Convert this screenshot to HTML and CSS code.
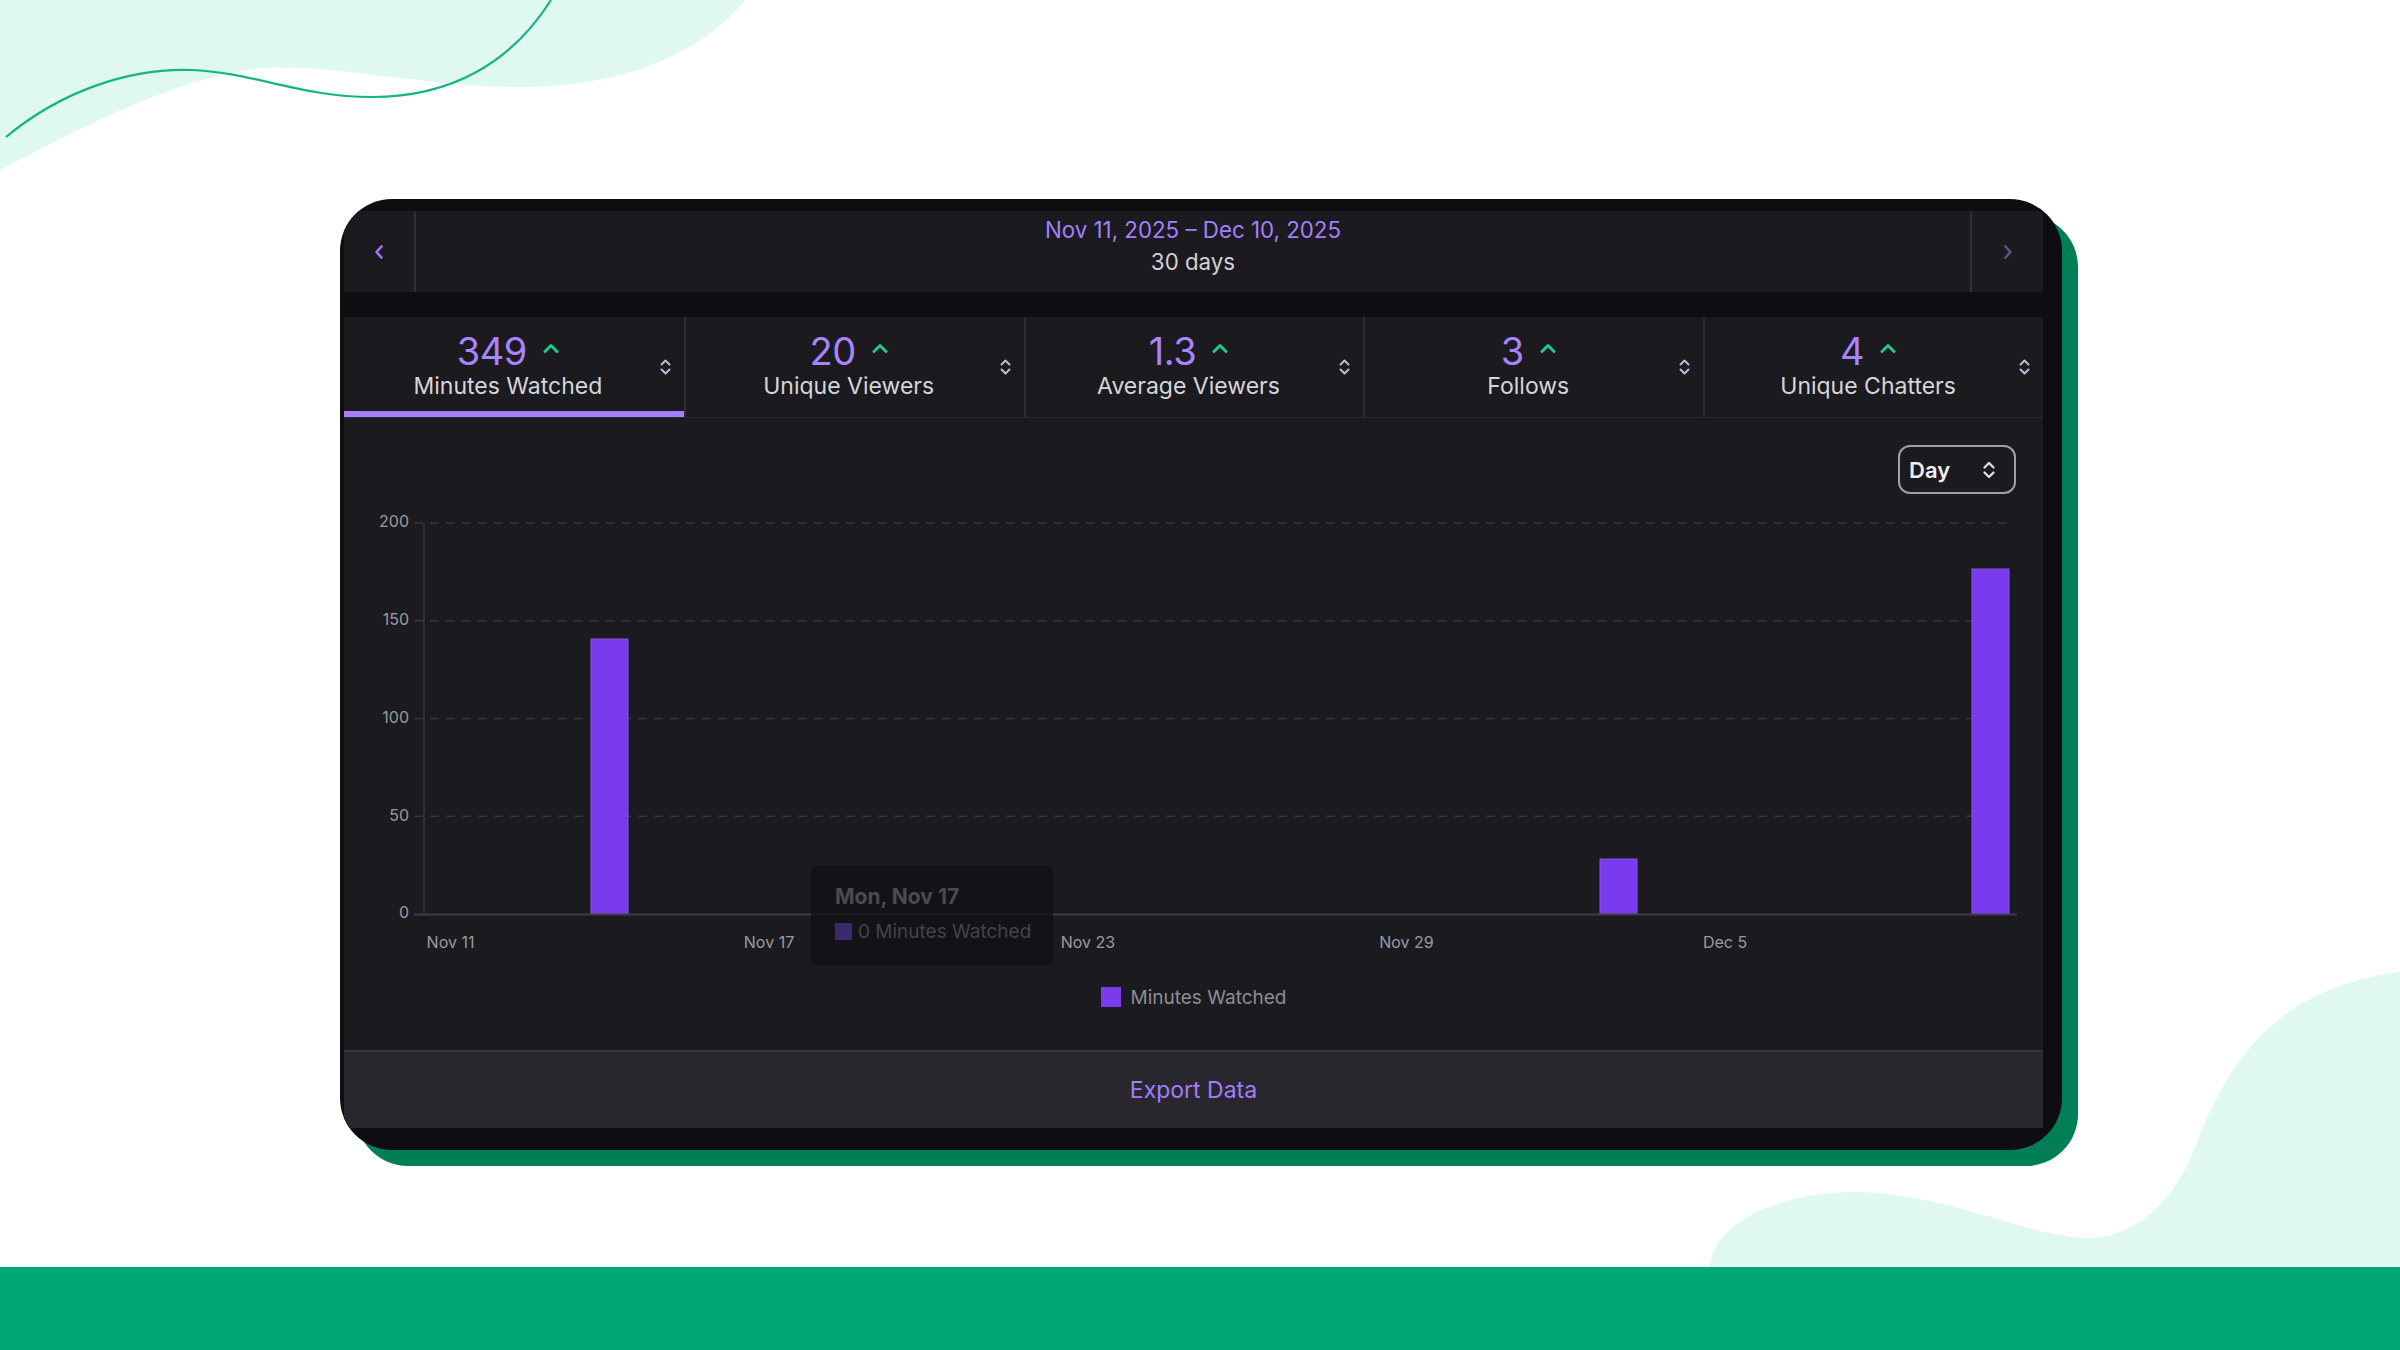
FILE: index.html
```html
<!DOCTYPE html>
<html lang="en">
<head>
<meta charset="utf-8">
<title>Stream Summary</title>
<link rel="stylesheet" href="styles.css">
</head>
<body>
<div class="page">
  <svg class="decor" width="2400" height="1350" viewBox="0 0 2400 1350" aria-hidden="true">
    <path class="blob" d="M0,0 L745,0 C700,55 620,88 515,87 C420,86 335,64 265,68 C180,76 85,125 0,170 Z"/>
    <path class="blob" d="M1710,1267 C1712,1222 1785,1190 1860,1192 C1950,1195 2030,1236 2082,1238 C2140,1240 2178,1195 2198,1140 C2238,1035 2300,985 2400,972 L2400,1267 Z"/>
    <path class="swoosh" d="M6,137 C60,92 128,68 191,70 C252,72 300,97 372,97 C452,97 512,62 551,0"/>
  </svg>

  <main class="stage">
    <section class="frame">
      <div class="screen">
        <header class="datebar">
          <button class="nav nav-prev" type="button" aria-label="Previous">
            <svg width="10" height="14" viewBox="0 0 10 14"><path d="M7.5 1.5 L2.5 7 L7.5 12.5"/></svg>
          </button>
          <div class="range">
            <div class="range-dates">Nov 11, 2025 – Dec 10, 2025</div>
            <div class="range-len">30 days</div>
          </div>
          <button class="nav nav-next" type="button" aria-label="Next">
            <svg width="10" height="14" viewBox="0 0 10 14"><path d="M2.5 1.5 L7.5 7 L2.5 12.5"/></svg>
          </button>
        </header>

        <div class="stats">
          <div class="stat active">
            <div class="stat-body">
              <div class="stat-value"><span class="num">349</span><svg class="up" width="16" height="10" viewBox="0 0 16 10"><path d="M2 8.5 L8 2.5 L14 8.5"/></svg></div>
              <div class="stat-label">Minutes Watched</div>
            </div>
            <svg class="sort" width="11" height="18" viewBox="0 0 11 18"><path d="M1.5 6.5 L5.5 2.5 L9.5 6.5 M1.5 11.5 L5.5 15.5 L9.5 11.5"/></svg>
          </div>
          <div class="stat">
            <div class="stat-body">
              <div class="stat-value"><span class="num">20</span><svg class="up" width="16" height="10" viewBox="0 0 16 10"><path d="M2 8.5 L8 2.5 L14 8.5"/></svg></div>
              <div class="stat-label">Unique Viewers</div>
            </div>
            <svg class="sort" width="11" height="18" viewBox="0 0 11 18"><path d="M1.5 6.5 L5.5 2.5 L9.5 6.5 M1.5 11.5 L5.5 15.5 L9.5 11.5"/></svg>
          </div>
          <div class="stat">
            <div class="stat-body">
              <div class="stat-value"><span class="num">1.3</span><svg class="up" width="16" height="10" viewBox="0 0 16 10"><path d="M2 8.5 L8 2.5 L14 8.5"/></svg></div>
              <div class="stat-label">Average Viewers</div>
            </div>
            <svg class="sort" width="11" height="18" viewBox="0 0 11 18"><path d="M1.5 6.5 L5.5 2.5 L9.5 6.5 M1.5 11.5 L5.5 15.5 L9.5 11.5"/></svg>
          </div>
          <div class="stat">
            <div class="stat-body">
              <div class="stat-value"><span class="num">3</span><svg class="up" width="16" height="10" viewBox="0 0 16 10"><path d="M2 8.5 L8 2.5 L14 8.5"/></svg></div>
              <div class="stat-label">Follows</div>
            </div>
            <svg class="sort" width="11" height="18" viewBox="0 0 11 18"><path d="M1.5 6.5 L5.5 2.5 L9.5 6.5 M1.5 11.5 L5.5 15.5 L9.5 11.5"/></svg>
          </div>
          <div class="stat">
            <div class="stat-body">
              <div class="stat-value"><span class="num">4</span><svg class="up" width="16" height="10" viewBox="0 0 16 10"><path d="M2 8.5 L8 2.5 L14 8.5"/></svg></div>
              <div class="stat-label">Unique Chatters</div>
            </div>
            <svg class="sort" width="11" height="18" viewBox="0 0 11 18"><path d="M1.5 6.5 L5.5 2.5 L9.5 6.5 M1.5 11.5 L5.5 15.5 L9.5 11.5"/></svg>
          </div>
        </div>

        <div class="chart">
          <div class="chart-tools">
            <div class="select">
              <span>Day</span>
              <svg width="14" height="20" viewBox="0 0 14 20"><path d="M2.5 7.5 L7 3 L11.5 7.5 M2.5 12.5 L7 17 L11.5 12.5"/></svg>
            </div>
          </div>

          <svg class="plot" width="1699" height="470" viewBox="0 0 1699 470">
            <g class="ylabels">
              <text x="65" y="29">200</text>
              <text x="65" y="126.75">150</text>
              <text x="65" y="224.5">100</text>
              <text x="65" y="322.25">50</text>
              <text x="65" y="420">0</text>
            </g>
            <g class="grid">
              <line x1="70" y1="29" x2="1666" y2="29"/>
              <line x1="70" y1="126.75" x2="1666" y2="126.75"/>
              <line x1="70" y1="224.5" x2="1666" y2="224.5"/>
              <line x1="70" y1="322.25" x2="1666" y2="322.25"/>
            </g>
            <line class="axis" x1="80" y1="29" x2="80" y2="420"/>
            <g class="bars">
              <rect x="247" y="145" width="37" height="275"/>
              <rect x="1256" y="365" width="37" height="55"/>
              <rect x="1628" y="75" width="37" height="345"/>
            </g>
            <line class="base" x1="70" y1="420.5" x2="1673" y2="420.5"/>
            <g class="xlabels">
              <text x="106.5" y="450">Nov 11</text>
              <text x="425" y="450">Nov 17</text>
              <text x="744" y="450">Nov 23</text>
              <text x="1062.5" y="450">Nov 29</text>
              <text x="1381" y="450">Dec 5</text>
            </g>
          </svg>

          <div class="legend">
            <span class="swatch"></span>
            <span class="legend-text">Minutes Watched</span>
          </div>

          <div class="tooltip">
            <div class="tip-title">Mon, Nov 17</div>
            <div class="tip-row"><span class="tip-swatch"></span><span>0 Minutes Watched</span></div>
          </div>
        </div>

        <footer class="export">
          <span class="export-link">Export Data</span>
        </footer>
      </div>
    </section>
  </main>

  <div class="band"></div>
</div>
</body>
</html>
```

FILE: styles.css
```css
* { box-sizing: border-box; }

html, body {
  margin: 0;
  padding: 0;
  background: #ffffff;
}

body {
  font-family: "Inter", "Noto Sans", "Liberation Sans", sans-serif;
}

.page {
  position: relative;
  width: 2400px;
  height: 1350px;
  overflow: hidden;
  display: flex;
  flex-direction: column;
  background: #ffffff;
}

.decor {
  position: absolute;
  left: 0;
  top: 0;
  z-index: 0;
}

.blob { fill: #dff9f1; }

.swoosh {
  fill: none;
  stroke: #14b584;
  stroke-width: 2.2;
}

.stage {
  position: relative;
  z-index: 1;
  height: 1267px;
  padding: 199px 0 0 340px;
}

.frame {
  width: 1722px;
  height: 951px;
  background: #0e0d12;
  border-radius: 52px;
  box-shadow: 16px 16px 0 0 #007f57;
  padding: 12px 19px 22px 4px;
  overflow: hidden;
}

.screen {
  width: 1699px;
  height: 917px;
  display: flex;
  flex-direction: column;
}

/* ---------- date bar ---------- */
.datebar {
  height: 81px;
  display: flex;
  background: #1b1a1f;
  margin-bottom: 25px;
}

.nav {
  width: 72px;
  border: none;
  background: transparent;
  padding: 0;
  display: flex;
  align-items: center;
  justify-content: center;
}

.nav svg path {
  fill: none;
  stroke-width: 2.6;
  stroke-linecap: round;
  stroke-linejoin: round;
}

.nav-prev { border-right: 2px solid #302f35; }
.nav-prev svg path { stroke: #a173f7; }

.nav-next { width: 73px; border-left: 2px solid #302f35; }
.nav-next svg path { stroke: #5f4f8c; }

.range {
  flex: 1;
  display: flex;
  flex-direction: column;
  align-items: center;
  padding-top: 3px;
  font-size: 22.3px;
  line-height: 32px;
}

.range-dates { color: #a57fff; }
.range-len { color: #d2d1d7; }

/* ---------- stats ---------- */
.stats {
  height: 101px;
  display: grid;
  grid-template-columns: repeat(5, 1fr);
  background: #1b1a1f;
  border-bottom: 1px solid #29282e;
}

.stat {
  display: flex;
  align-items: center;
  padding-left: 18px;
  padding-right: 13px;
  border-left: 2px solid #2c2b31;
}

.stat:first-child { border-left: none; }

.stat.active { box-shadow: inset 0 -6px 0 #a47cff; }

.stat-body {
  flex: 1;
  align-self: flex-start;
  padding-top: 14px;
  padding-right: 6px;
  display: flex;
  flex-direction: column;
  align-items: center;
}

.stat-value {
  display: flex;
  align-items: center;
  gap: 16px;
  height: 40px;
}

.num {
  font-size: 38px;
  line-height: 40px;
  color: #a884ff;
  letter-spacing: -0.5px;
}

.up {
  margin-bottom: 6px;
}

.up path {
  fill: none;
  stroke: #1fc98c;
  stroke-width: 3;
  stroke-linecap: round;
  stroke-linejoin: round;
}

.stat-label {
  font-size: 23px;
  line-height: 28px;
  color: #d6d5db;
  margin-top: 1px;
}

.sort path {
  fill: none;
  stroke: #c2b8dc;
  stroke-width: 2;
  stroke-linecap: round;
  stroke-linejoin: round;
}

/* ---------- chart ---------- */
.chart {
  position: relative;
  height: 632px;
  background: #1b1a1f;
  padding-top: 27px;
}

.chart-tools {
  display: flex;
  justify-content: flex-end;
  padding-right: 27px;
}

.select {
  width: 118px;
  height: 49px;
  border: 2px solid #a09fa6;
  border-radius: 12px;
  display: flex;
  align-items: center;
  justify-content: space-between;
  padding: 0 18px 0 9px;
  font-size: 22px;
  font-weight: 600;
  color: #efeff1;
}

.select svg path {
  fill: none;
  stroke: #dcdce0;
  stroke-width: 2.4;
  stroke-linecap: round;
  stroke-linejoin: round;
}

.plot {
  display: block;
}

.ylabels text {
  font-size: 16px;
  fill: #9b9aa1;
  text-anchor: end;
  dominant-baseline: middle;
}

.xlabels text {
  font-size: 16px;
  fill: #9b9aa1;
  text-anchor: middle;
  dominant-baseline: middle;
}

.grid line {
  stroke: #38373d;
  stroke-width: 1.5;
  stroke-dasharray: 9 7;
}

.axis {
  stroke: #38373d;
  stroke-width: 1.5;
}

.base {
  stroke: #3d3c42;
  stroke-width: 2;
}

.bars rect {
  fill: #7a3bee;
  stroke: #8552f2;
  stroke-width: 1;
}

.legend {
  display: flex;
  align-items: center;
  justify-content: center;
  gap: 10px;
  margin-top: 23px;
  height: 20px;
}

.swatch {
  width: 20px;
  height: 20px;
  background: #7a3bee;
}

.legend-text {
  font-size: 19px;
  color: #8e8d94;
}

.tooltip {
  position: absolute;
  left: 467px;
  top: 448px;
  width: 242px;
  height: 99px;
  background: rgba(16, 15, 19, 0.72);
  border-radius: 6px;
  padding: 17px 0 0 24px;
}

.tip-title {
  font-size: 21px;
  font-weight: 700;
  line-height: 28px;
  color: #4b4a51;
}

.tip-row {
  display: flex;
  align-items: center;
  gap: 6px;
  margin-top: 9px;
  font-size: 19px;
  color: #44434a;
}

.tip-swatch {
  width: 17px;
  height: 17px;
  background: #3a2a6c;
}

/* ---------- export ---------- */
.export {
  height: 78px;
  background: #29272e;
  border-top: 2px solid #38363d;
  display: flex;
  align-items: center;
  justify-content: center;
}

.export-link {
  font-size: 23px;
  color: #a47cff;
}

.band {
  position: relative;
  z-index: 1;
  height: 83px;
  background: #00a974;
}
```
